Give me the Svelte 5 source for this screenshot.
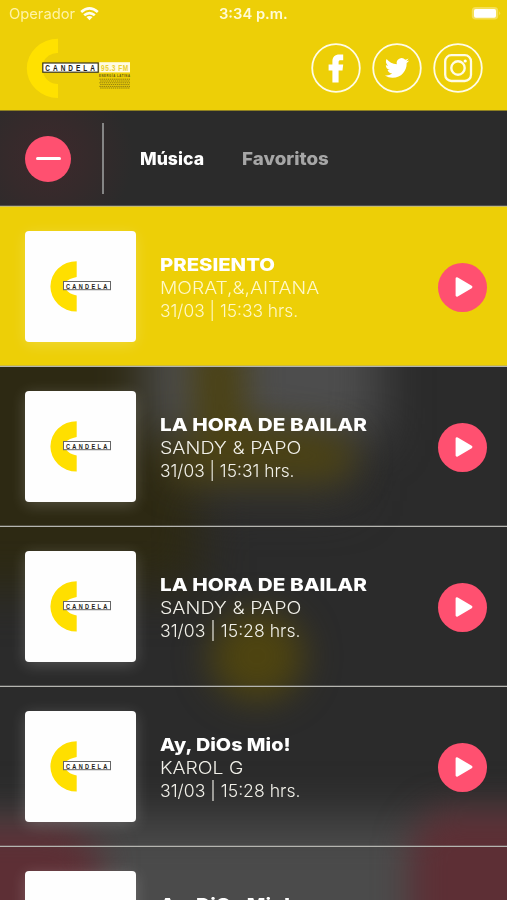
<script>
  const tracks = [
    { title: ['PRESIENTO', 115], artist: ['MORAT,&,AITANA', 159.5], time: ['31/03 | 15:33 hrs.', 138], active: true },
    { title: ['LA HORA DE BAILAR', 207], artist: ['SANDY & PAPO', 141], time: ['31/03 | 15:31 hrs.', 135] },
    { title: ['LA HORA DE BAILAR', 207], artist: ['SANDY & PAPO', 141], time: ['31/03 | 15:28 hrs.', 140] },
    { title: ['Ay, DiOs Mio!', 131], artist: ['KAROL G', 83], time: ['31/03 | 15:28 hrs.', 140] },
    { title: ['Ay, DiOs Mio!', 131], artist: ['KAROL G', 83], time: ['31/03 | 15:28 hrs.', 140] }
  ];

  // Widens or narrows a line of text to the given width.
  function fit(node, width) {
    node.style.transform = `scaleX(${width / node.offsetWidth})`;
  }
</script>

<div class="screen">
  <svg class="backdrop" width="507" height="534" viewBox="0 366 507 534">
    <defs>
      <filter id="haze" filterUnits="userSpaceOnUse" x="-150" y="200" width="800" height="850" color-interpolation-filters="sRGB"><feGaussianBlur stdDeviation="24" /></filter>
      <filter id="soft" filterUnits="userSpaceOnUse" x="-150" y="200" width="800" height="850" color-interpolation-filters="sRGB"><feGaussianBlur stdDeviation="17" /></filter>
    </defs>
    <rect y="366" width="507" height="534" fill="#2b2b2b" />
    <g filter="url(#haze)">
      <rect x="-100" y="280" width="300" height="310" fill="#2d2913" />
      <rect x="145" y="260" width="235" height="180" fill="#4d4d4d" />
      <rect x="190" y="440" width="160" height="60" fill="#343330" />
      <rect x="-100" y="818" width="720" height="200" fill="#4b4b4b" />
    </g>
    <g filter="url(#soft)">
      <path d="M190 340H245V420L330 432Q355 438 355 458T330 482H170V445H195Z" fill="#4b4214" />
      <ellipse cx="257" cy="656" rx="47" ry="45" fill="#4e4410" />
      <path d="M-100 825H65L100 850V1000H-100Z" fill="#5d2f35" />
      <path d="M620 810H435L410 840V1000H620Z" fill="#5d2f35" />
    </g>
  </svg>

  <header>
    <div class="status">
      <span class="carrier"><span use:fit={65}>Operador</span>
        <svg width="19" height="14" viewBox="0 0 19 14" fill="none" stroke="#fffef0" stroke-width="2.7">
          <path d="M1.2 5.1 Q9.5 -2.2 17.8 5.1" />
          <path d="M4.2 8.3 Q9.5 3.8 14.8 8.3" />
          <path d="M6.4 10 Q9.5 7.8 12.6 10 L9.5 13.3 Z" fill="#fffef0" stroke="none" />
        </svg>
      </span>
      <span class="clock"><span use:fit={69}>3:34 p.m.</span></span>
      <svg class="battery" width="30" height="15" viewBox="0 0 30 15">
        <rect x="0.8" y="1" width="26.4" height="12.5" rx="3.8" fill="#f5df55" />
        <rect x="3" y="2.9" width="22" height="8.8" rx="1.8" fill="#fff" />
        <path d="M28.2 5.2q2 2 0 4z" fill="#f5df55" />
      </svg>
    </div>
    <div class="brand">
      <svg width="106" height="62" viewBox="0 0 106 62">
        <path d="M32 .8A31.2 29.6 0 0 0 32 60V46A15 15 0 0 1 17 34V25A15 15 0 0 1 32 15Z" fill="#ffe100" />
        <rect x="16.8" y="25" width="55.4" height="9.2" fill="#fff" stroke="#39351e" stroke-width="1.2" />
        <g transform="translate(19.3 33.1) scale(.7 1)"><text textLength="71" class="label">CANDELA</text></g>
        <rect x="73.2" y="24.2" width="30.8" height="10.2" fill="#fffbe2" />
        <g transform="translate(75 33) scale(.7 1)"><text textLength="39" class="label freq">95.3 FM</text></g>
        <g transform="translate(73 38.9) scale(.75 1)"><text textLength="41.3" class="tag">ENERGÍA LATINA</text></g>
        <g stroke="#756713" stroke-width="0.8" fill="none" stroke-dasharray="1.4 0.7">
          <path d="M73.4 41.2H104M74.2 43H104M73.4 44.8H104M74.2 46.6H104M73.4 48.4H104M74.2 50H104" />
        </g>
      </svg>
      <div class="social">
        <svg width="50" height="50" viewBox="0 0 50 50">
          <circle cx="25" cy="25" r="23.8" />
          <path class="solid" d="M21.4 39.6V27.4H17.6V21.6H21.4V18.5C21.4 13.9 23.9 11.6 28.5 11.6H32.2V17.2H29.8C28.2 17.2 27.6 17.8 27.6 19.2V21.6H32.2L31.5 27.4H27.6V39.6Z" />
        </svg>
        <svg width="50" height="50" viewBox="0 0 50 50">
          <circle cx="25" cy="25" r="23.8" />
          <path class="solid" transform="translate(12.9 12.8) scale(1.01)" d="M23.95 4.57a10 10 0 0 1-2.82.77 4.96 4.96 0 0 0 2.16-2.72c-.95.55-2 .96-3.13 1.18a4.92 4.92 0 0 0-8.38 4.48C7.69 8.1 4.07 6.13 1.64 3.16a4.92 4.92 0 0 0 1.52 6.57 4.9 4.9 0 0 1-2.23-.61v.06a4.92 4.92 0 0 0 3.95 4.83 5 5 0 0 1-2.21.08 4.94 4.94 0 0 0 4.6 3.42A9.87 9.87 0 0 1 0 19.54a14 14 0 0 0 7.55 2.21c9.05 0 14-7.5 14-13.98 0-.21 0-.42-.02-.63a9.94 9.94 0 0 0 2.42-2.57z" />
        </svg>
        <svg width="50" height="50" viewBox="0 0 50 50">
          <circle cx="25" cy="25" r="23.8" />
          <rect x="12.2" y="12.2" width="25.8" height="25.8" rx="6.2" stroke-width="2.3" />
          <circle cx="25" cy="25" r="6.7" stroke-width="2.4" />
          <circle class="solid" cx="32.2" cy="18" r="1.6" />
        </svg>
      </div>
    </div>
  </header>

  <nav>
    <button class="round minus" aria-label="Menu"><span></span></button>
    <div class="divider"></div>
    <span class="tab current"><span use:fit={64.5}>Música</span></span>
    <span class="tab"><span use:fit={86.5}>Favoritos</span></span>
  </nav>

  <main>
    {#each tracks as track}
      <article class:active={track.active}>
        <div class="cover">
          <svg width="62" height="52" viewBox="0 0 62 52">
            <path d="M26.7 1.2A26.3 25.2 0 0 0 26.7 51.6V35.6Q19 34 15.5 29V22Q19 18.5 26.7 17Z" fill="#ffdf00" />
            <rect x="13.5" y="21.5" width="47" height="8.2" fill="#fff" stroke="#666" stroke-width="1" />
            <g transform="translate(16 28.5) scale(.7 1)"><text textLength="59" class="label small">CANDELA</text></g>
          </svg>
        </div>
        <div class="info">
          <h2><span use:fit={track.title[1]}>{track.title[0]}</span></h2>
          <p><span use:fit={track.artist[1]}>{track.artist[0]}</span></p>
          <p><span use:fit={track.time[1]}>{track.time[0]}</span></p>
        </div>
        <button class="round play" aria-label="Play">
          <svg width="20" height="22" viewBox="0 0 20 22">
            <path d="M3 2.6L17 11L3 19.4Z" fill="#fff" stroke="#fff" stroke-width="2.8" stroke-linejoin="round" />
          </svg>
        </button>
      </article>
    {/each}
  </main>
</div>

<style>
  :global(body) { margin: 0; }
  .screen {
    position: relative;
    isolation: isolate;
    width: 507px;
    height: 900px;
    overflow: hidden;
    display: flex;
    flex-direction: column;
    font-family: Inter, 'Noto Sans', sans-serif;
    color: #fff;
    background: #2b2b2b;
  }
  .backdrop { position: absolute; left: 0; bottom: 0; z-index: -1; }
  header {
    height: 110px;
    flex: none;
    background: #edcf07;
    border-bottom: 1px solid #8e8021;
  }
  .status {
    display: flex;
    align-items: center;
    height: 27px;
    padding: 0 6px 0 9px;
    font-size: 14.5px;
  }
  .carrier { display: flex; width: 210px; align-items: center; color: #fff3a5; }
  .carrier span { width: 64px; margin-right: 7px; }
  .clock { color: #fffbd8; font-weight: 600; width: 69px; }
  .clock span, .carrier span, .tab span, h2 span, p span {
    display: inline-block;
    white-space: pre;
    transform-origin: left;
  }
  .battery { margin-left: auto; }
  .brand {
    display: flex;
    justify-content: space-between;
    padding: 11px 24px 0 26px;
  }
  .brand > svg { flex: none; }
  .social { display: flex; gap: 11px; padding-top: 5px; }
  .social svg { fill: none; stroke: #fffce6; stroke-width: 1.8; }
  .social .solid { fill: #fff; stroke: none; }
  .label { font: bold 9.3px 'Liberation Sans', sans-serif; fill: #1c1a14; }
  .label.freq { fill: #ecd030; }
  .tag { font: bold 3.7px 'Liberation Sans', sans-serif; fill: #594f13; }
  .label.small { font-size: 8px; }
  nav {
    height: 95px;
    flex: none;
    display: flex;
    align-items: center;
    background: radial-gradient(circle 85px at 48px 47px, #3e292c 0%, #352a2b 50%, #2b2b2b 100%);
    font-size: 17.8px;
    font-weight: 800;
  }
  .round {
    border: 0;
    padding: 0;
    border-radius: 50%;
    background: #ff5070;
    display: flex;
    align-items: center;
    justify-content: center;
    flex: none;
  }
  .minus { width: 46px; height: 46px; margin-left: 25px; }
  .minus span { width: 25px; height: 3.5px; border-radius: 2px; background: #fff; }
  .divider { width: 2px; height: 71px; margin: 0 36px 0 30.5px; background: #858585; }
  .tab { width: 102px; color: #a6a6a6; }
  .current { color: #fff; }
  article {
    height: 160px;
    box-sizing: border-box;
    border-top: 1px solid #b5b5b0;
    box-shadow: 0 -1px rgba(150, 150, 145, .35);
    display: flex;
    padding: 24px 20px 0 25px;
  }
  .active { background: #edcf07; border-color: #c9bd69; }
  .cover {
    width: 110.5px;
    height: 110.5px;
    flex: none;
    border-radius: 4px;
    background: #fefefe;
    box-shadow: 0 3px 15px rgba(255, 255, 255, .2);
  }
  .cover svg { display: block; margin: 29px 0 0 25px; }
  .info { flex: 1; padding: 22px 0 0 24.5px; }
  h2, p { margin: 0; height: 23px; line-height: 23px; }
  h2 { font-size: 18px; font-weight: 800; }
  p { font-size: 17.5px; font-weight: 300; color: #f1f0e9; }
  h2 + p { line-height: 24px; }
  .active p { color: #fff8c7; }
  .play { width: 49px; height: 49px; margin-top: 31.5px; }
  .play svg { margin-left: 2px; }
</style>
